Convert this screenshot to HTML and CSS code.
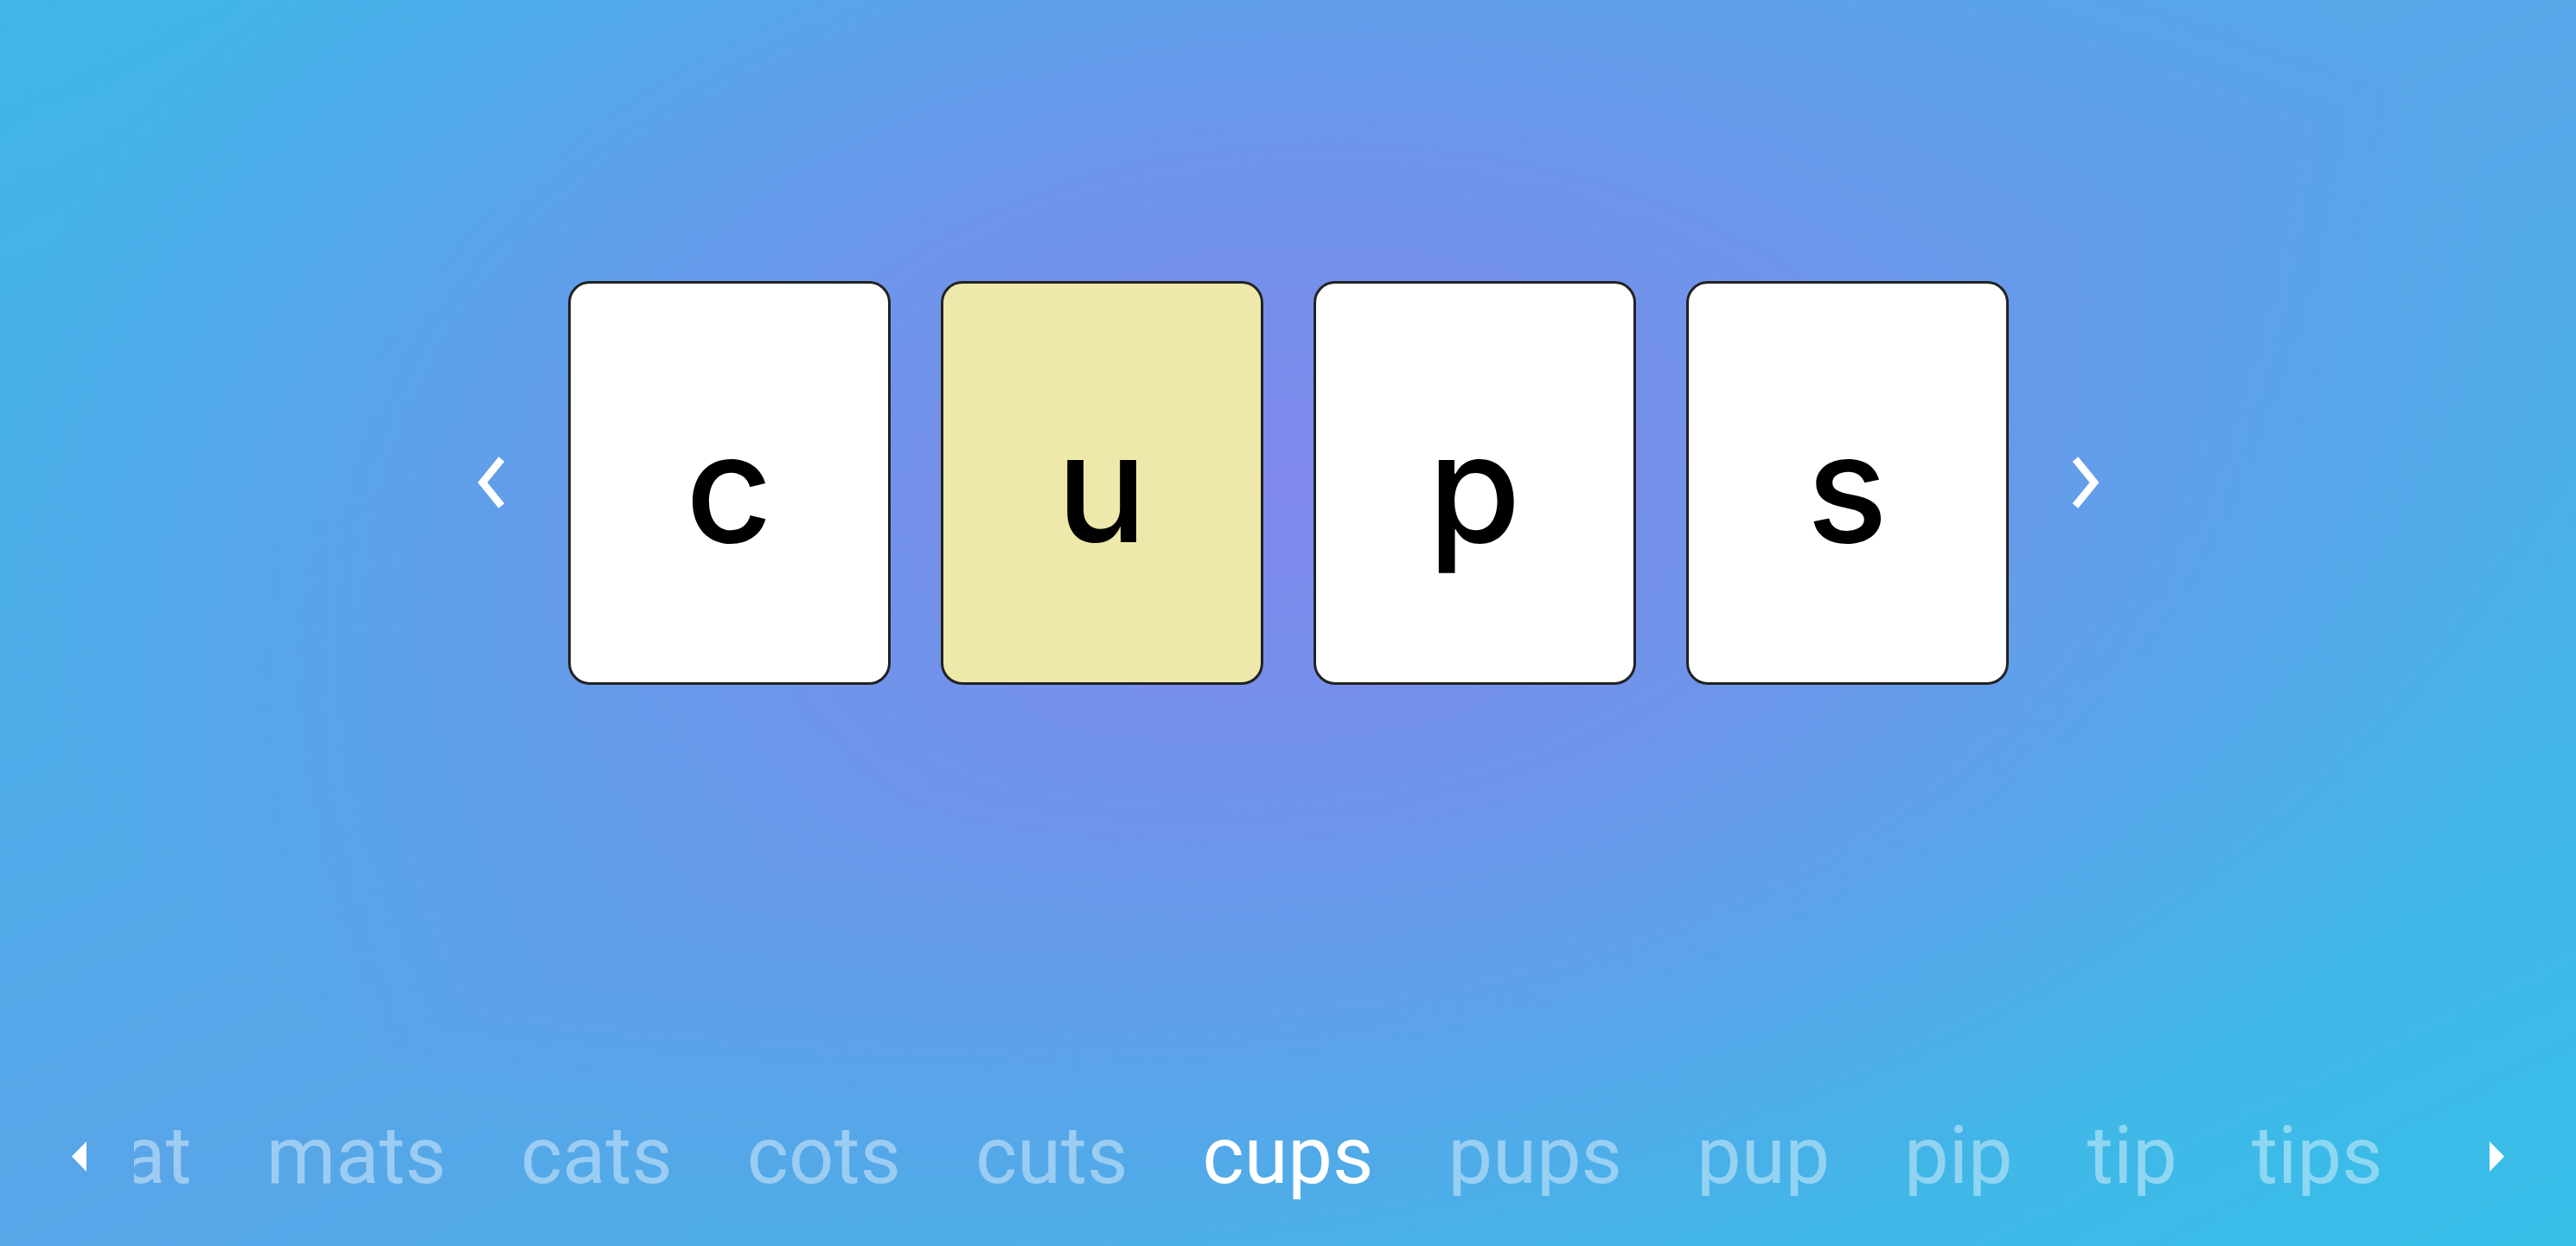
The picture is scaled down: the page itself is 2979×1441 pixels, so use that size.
FILE: index.html
```html
<!DOCTYPE html>
<html lang="en">
<head>
<meta charset="utf-8">
<title>Word ladder</title>
<link rel="stylesheet" href="styles.css">
</head>
<body>
<div class="app">
  <main class="stage">
    <button class="nav" aria-label="Previous word">
      <svg class="chevron" viewBox="0 0 35 64" width="35" height="64"><polyline points="30,5 8,32 30,59"/></svg>
    </button>
    <div class="tiles">
      <div class="tile">c</div>
      <div class="tile tile-active">u</div>
      <div class="tile">p</div>
      <div class="tile">s</div>
    </div>
    <button class="nav" aria-label="Next word">
      <svg class="chevron" viewBox="0 0 35 64" width="35" height="64"><polyline points="5,5 27,32 5,59"/></svg>
    </button>
  </main>
  <footer class="history">
    <button class="step" aria-label="Scroll left">
      <svg viewBox="0 0 17 35" width="17" height="35"><polygon points="17,0 0,17.5 17,35"/></svg>
    </button>
    <div class="strip">
      <div class="side side-before">
        <span class="word">at</span>
        <span class="word">mats</span>
        <span class="word">cats</span>
        <span class="word">cots</span>
        <span class="word">cuts</span>
      </div>
      <span class="word word-current">cups</span>
      <div class="side side-after">
        <span class="word">pups</span>
        <span class="word">pup</span>
        <span class="word">pip</span>
        <span class="word">tip</span>
        <span class="word">tips</span>
      </div>
    </div>
    <button class="step" aria-label="Scroll right">
      <svg viewBox="0 0 17 35" width="17" height="35"><polygon points="0,0 17,17.5 0,35"/></svg>
    </button>
  </footer>
</div>
</body>
</html>
```

FILE: styles.css
```css
* {
  box-sizing: border-box;
}

html, body {
  margin: 0;
  height: 100%;
}

body {
  font-family: "Roboto", "Liberation Sans", sans-serif;
  background:
    radial-gradient(1500px 950px at 1490px 560px,
      rgba(128, 136, 236, 1) 0%,
      rgba(128, 136, 236, 0.62) 40%,
      rgba(128, 136, 236, 0.22) 75%,
      rgba(128, 136, 236, 0) 100%),
    linear-gradient(to bottom right, #40b5e9 0%, #58a5e8 50%, #36bfe8 100%);
  overflow: hidden;
}

.app {
  height: 100vh;
  display: flex;
  flex-direction: column;
}

.stage {
  flex: 1;
  display: flex;
  align-items: center;
  justify-content: center;
  gap: 72px;
  padding-bottom: 109px;
}

.nav,
.step {
  background: none;
  border: 0;
  padding: 0;
  margin: 0;
  display: flex;
  cursor: pointer;
}

.chevron polyline {
  fill: none;
  stroke: #ffffff;
  stroke-width: 8.5;
  stroke-linejoin: miter;
  stroke-linecap: butt;
}

.tiles {
  display: flex;
  gap: 58px;
}

.tile {
  width: 373px;
  height: 467px;
  border: 3px solid #222222;
  border-radius: 25px;
  background: #ffffff;
  display: flex;
  align-items: center;
  justify-content: center;
  padding-top: 10px;
  font-family: "Inter", "Lato", sans-serif;
  font-size: 174px;
  font-weight: 500;
  color: #000000;
}

.tile-active {
  background: #eee8aa;
}

.history {
  height: 216px;
  display: flex;
  align-items: center;
  padding: 8px 83px 0;
  gap: 55px;
}

.step polygon {
  fill: #ffffff;
}

.strip {
  flex: 1;
  min-width: 0;
  display: grid;
  grid-template-columns: minmax(0, 1fr) auto minmax(0, 1fr);
  align-items: center;
}

.side {
  display: flex;
  overflow: hidden;
  white-space: nowrap;
}

.side-before {
  justify-content: flex-end;
}

.side-after {
  justify-content: flex-start;
}

.word {
  flex: none;
  padding: 0 43px;
  font-size: 92px;
  line-height: 1;
  color: rgba(255, 255, 255, 0.42);
}

.word-current {
  color: #ffffff;
}
```
